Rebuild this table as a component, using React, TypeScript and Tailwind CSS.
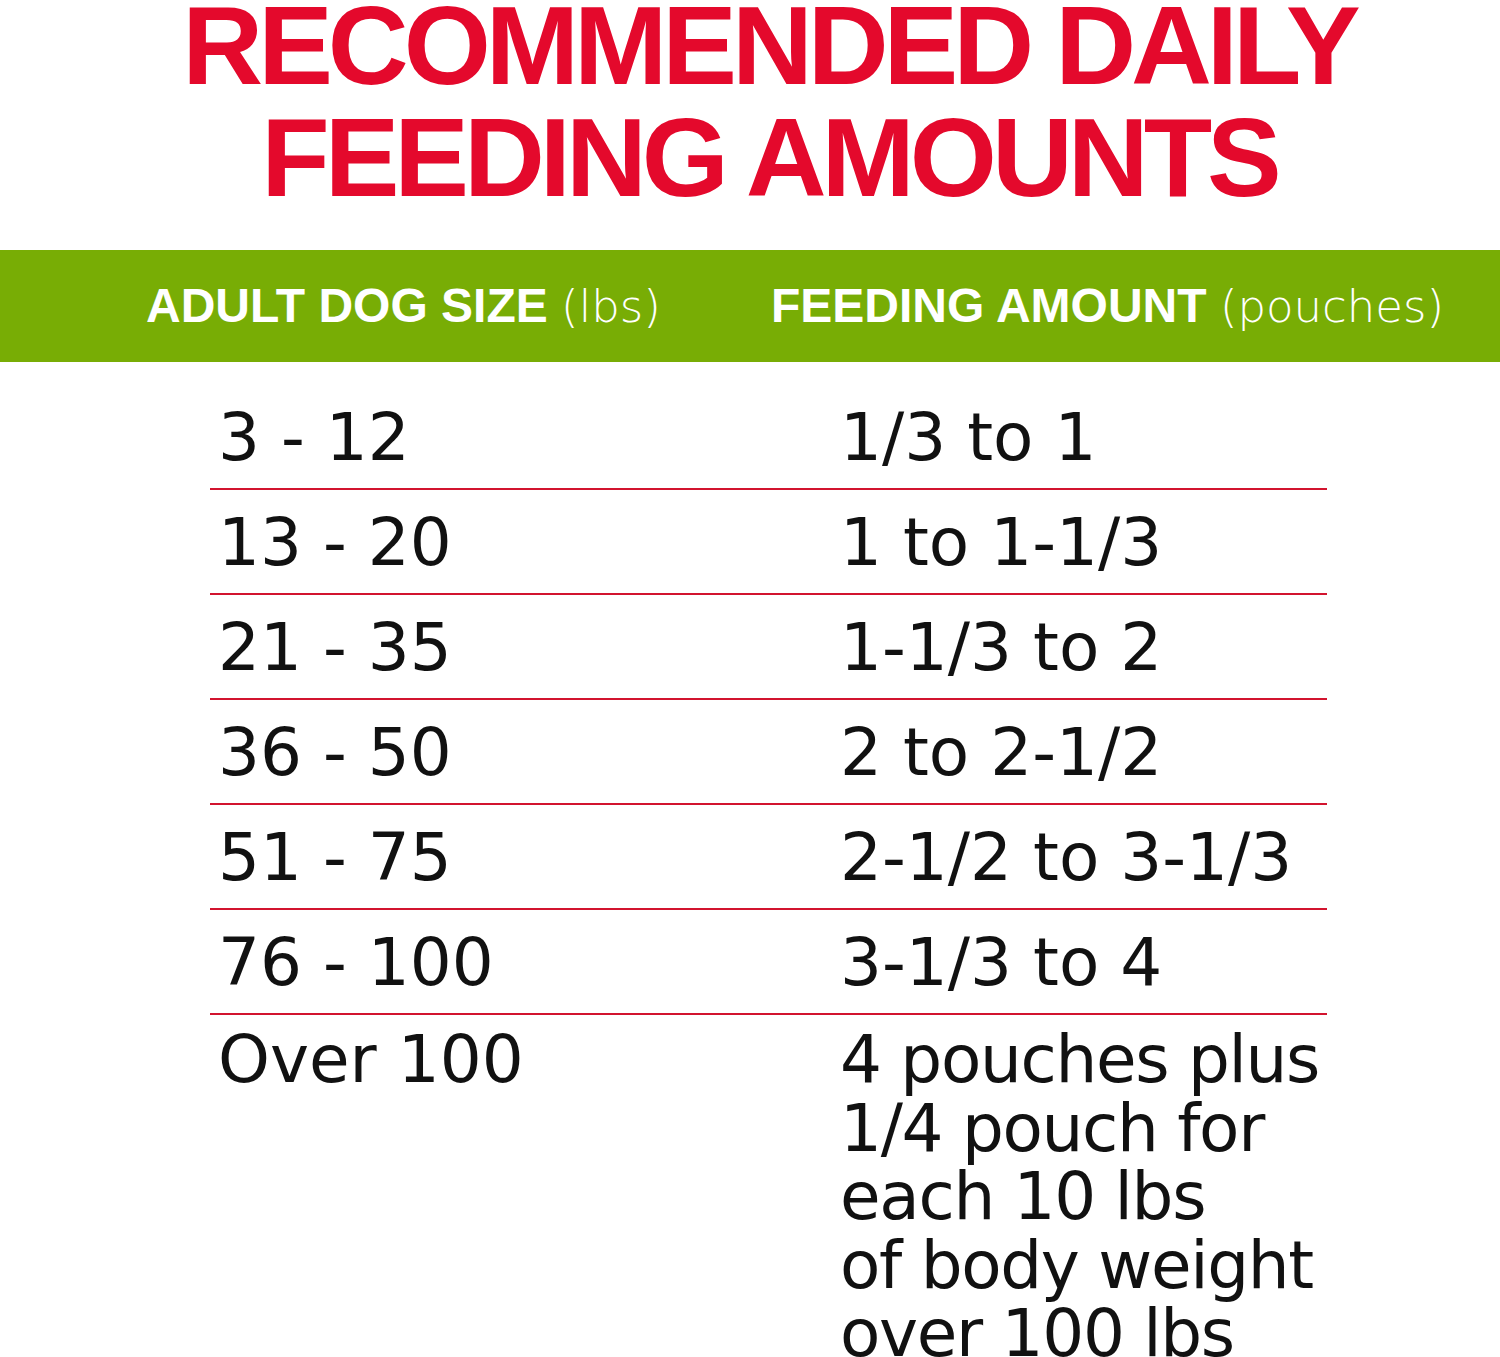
const rows: [string, string][] = [
  ['3 - 12', '1/3 to 1'],
  ['13 - 20', '1 to 1-1/3'],
  ['21 - 35', '1-1/3 to 2'],
  ['36 - 50', '2 to 2-1/2'],
  ['51 - 75', '2-1/2 to 3-1/3'],
  ['76 - 100', '3-1/3 to 4'],
];

export default function App() {
  return (
    <div className="w-[1500px] h-[1357px] overflow-hidden bg-white">
      <h1 className="-mt-[10px] pl-[38px] text-center font-['Liberation_Sans',sans-serif] font-bold text-[112px] leading-[112px] tracking-[-0.045em] text-[#e4092c] whitespace-nowrap">
        RECOMMENDED DAILY
        <br />
        FEEDING AMOUNTS
      </h1>

      <div className="mt-[36px] h-[112px] bg-[#78ad05] flex items-center text-white font-['Liberation_Sans',sans-serif] text-[48px]">
        <div className="w-[771px] shrink-0 pl-[146px] whitespace-nowrap">
          <span className="font-bold">ADULT DOG SIZE</span>{' '}
          <span className="font-['DejaVu_Sans',sans-serif] font-extralight text-[45px]">(lbs)</span>
        </div>
        <div className="whitespace-nowrap">
          <span className="font-bold">FEEDING AMOUNT</span>{' '}
          <span className="font-['DejaVu_Sans',sans-serif] font-extralight text-[45px]">(pouches)</span>
        </div>
      </div>

      <div className="mt-[23px] ml-[210px] w-[1117px] font-['DejaVu_Sans',sans-serif] text-[66px] leading-[68px] text-[#111111]">
        {rows.map(([size, amount]) => (
          <div key={size} className="flex pt-[19px] pb-[16px] border-b-2 border-[#d2142f]">
            <div className="w-[630px] shrink-0 pl-[8px] whitespace-nowrap">{size}</div>
            <div className="whitespace-nowrap">{amount}</div>
          </div>
        ))}
        <div className="flex pt-[11px]">
          <div className="w-[630px] shrink-0 pl-[8px] whitespace-nowrap">Over 100</div>
          <div className="leading-[68.5px] whitespace-nowrap tracking-[-0.02em]">
            4 pouches plus
            <br />
            1/4 pouch for
            <br />
            each 10 lbs
            <br />
            of body weight
            <br />
            over 100 lbs
          </div>
        </div>
      </div>
    </div>
  );
}
